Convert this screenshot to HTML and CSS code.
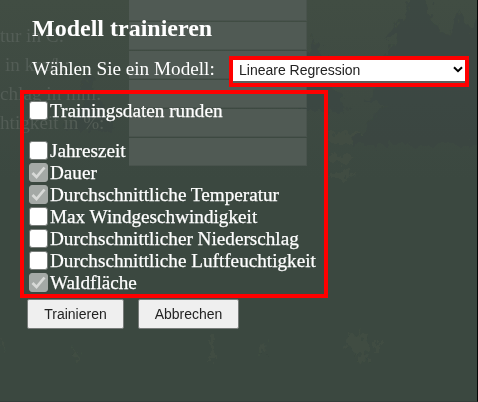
FILE: index.html
```html
<!DOCTYPE html>
<html lang="de">
<head>
<meta charset="utf-8">
<title>Modell trainieren</title>
<link rel="stylesheet" href="styles.css">
</head>
<body>
<div class="backdrop" aria-hidden="true">
  <svg class="forest" viewBox="0 0 478 402">
    <defs><filter id="rough"><feTurbulence type="fractalNoise" baseFrequency=".15 .12" numOctaves="3" seed="4"/><feDisplacementMap in="SourceGraphic" scale="18" xChannelSelector="R" yChannelSelector="G"/><feGaussianBlur stdDeviation=".6"/></filter></defs>
    <g filter="url(#rough)">
      <path class="tree" d="M416-20L405 15 385 38H396L382 68H392L365 104H385L350 145H490V0L470 35 460 10 448 40 434 20Z"/>
      <path class="tree" d="M313 35L306 60 298 81H306L295 112H348L331 82H338L323 60Z"/>
      <path class="tree" d="M88 73L78 96 82 105 65 130H117L101 104Z"/>
      <path class="clearing" d="M330 132h31l-10 12h-20zM330 156h25l-7 8h-18zM329 173h25l-4 6h-22zM344 341l8-7 6 2 2-6 7 7 3 13-8 17-5-12-8-5zM375 337h4v14h-4zM0 337l5 5-2 12zM74 344l6 14-4 6zM210 336h4v25h-4zM258 350l8-6-1 11z"/>
    </g>
  </svg>
  <div class="old-form">
    <div class="old-labels"><span>tur in C:</span><span class="wind">in km/h:</span><span>chlag in mm:</span><span>htigkeit in %:</span></div>
    <div class="old-fields"><i></i><i></i><i></i><i></i><i></i><i></i></div>
  </div>
</div>
<main class="dialog">
  <h1>Modell trainieren</h1>
  <div class="model-row">
    <label for="model">Wählen Sie ein Modell:</label>
    <div class="select-frame">
      <select id="model"><option>Lineare Regression</option></select>
      <svg class="chevron" viewBox="0 0 10 7"><path d="M1 1.2L5 5.2 9 1.2"/></svg>
    </div>
  </div>
  <div class="options">
    <label class="option round"><input type="checkbox"><span>Trainingsdaten runden</span></label>
    <label class="option"><input type="checkbox"><span>Jahreszeit</span></label>
    <label class="option"><input type="checkbox" checked disabled><span>Dauer</span></label>
    <label class="option"><input type="checkbox" checked disabled><span>Durchschnittliche Temperatur</span></label>
    <label class="option"><input type="checkbox"><span>Max Windgeschwindigkeit</span></label>
    <label class="option"><input type="checkbox"><span>Durchschnittlicher Niederschlag</span></label>
    <label class="option"><input type="checkbox"><span>Durchschnittliche Luftfeuchtigkeit</span></label>
    <label class="option"><input type="checkbox" checked disabled><span>Waldfläche</span></label>
  </div>
  <div class="actions"><button class="train">Trainieren</button><button class="cancel">Abbrechen</button></div>
</main>
</body>
</html>
```
FILE: styles.css
```css
* { box-sizing: border-box; }
body {
  margin: 0;
  width: 478px;
  height: 402px;
  overflow: hidden;
  position: relative;
  background: #3c4941;
  color: #fff;
  font: 19.2px/22px "Liberation Serif", serif;
}
.backdrop {
  position: absolute;
  inset: 0;
  overflow: hidden;
  background: linear-gradient(#414d43, #3e4a42 100px, #3b4840 180px, #3b4840);
  border-right: 1px solid #050706;
  border-bottom: 1px solid #353e3b;
}
.forest { position: absolute; inset: 0; width: 478px; height: 402px; }
.tree { fill: #3a4740; opacity: .65; }
.clearing { fill: #424f43; opacity: .7; }
.old-form { position: relative; display: flex; }
.old-labels {
  width: 129px;
  padding-top: 21px;
  display: flex;
  flex-direction: column;
  color: #535d56;
  line-height: 29px;
  white-space: nowrap;
}
.wind { padding-left: 5px; }
.old-fields { width: 178px; margin-top: -7px; display: flex; flex-direction: column; gap: 2px; }
.old-fields i { height: 27px; background: #505a54; border-right: 1px solid #49534d; box-shadow: 0 1px #49534d; }
.dialog { position: relative; }
h1 {
  margin: 0;
  padding: 14px 0 0 32px;
  font-size: 24px;
  line-height: 28px;
}
.model-row {
  display: flex;
  align-items: flex-start;
  padding: 14px 0 0 32px;
  height: 45px;
}
.model-row label { width: 197px; padding-top: 2px; white-space: nowrap; }
.select-frame {
  position: relative;
  width: 240px;
  height: 31px;
  border: 4px solid #f00;
  background: #59615d;
}
select {
  display: block;
  appearance: none;
  width: 232px;
  height: 21px;
  border: 0;
  border-radius: 0;
  padding: 0 6px 1px;
  background: #fff;
  color: #222;
  font: 14px/20px "Liberation Sans", sans-serif;
}
.chevron { position: absolute; right: 2px; top: 6px; width: 10px; height: 7px; fill: none; stroke: #000; stroke-width: 2; }
.options {
  width: 308px;
  height: 208px;
  margin: 3px 0 0 20px;
  border: 4px solid #f00;
  padding: 6px 0 0 5px;
}
.option {
  display: flex;
  align-items: center;
  gap: 2px;
  height: 22px;
  white-space: nowrap;
}
.round { margin-bottom: 18px; }
.option span { -webkit-text-stroke: .25px #fff; }
input {
  appearance: none;
  flex: none;
  width: 19px;
  height: 19px;
  margin: 0 0 1px;
  border: 1px solid #777c79;
  border-radius: 3px;
  background: #fff;
}
input:checked {
  border-color: #a4a9a6;
  background: #a4a9a6 url("data:image/svg+xml,%3Csvg xmlns='http://www.w3.org/2000/svg' viewBox='0 0 17 17'%3E%3Cpath d='M2.5 9L6.5 13 14.5 3.5' fill='none' stroke='%23d8dad8' stroke-width='2.7'/%3E%3C/svg%3E");
}
.actions { display: flex; gap: 14px; padding: 1px 0 0 27px; }
button {
  height: 30px;
  padding: 0;
  border: 1px solid #777b79;
  border-radius: 2px;
  background: #efefef;
  color: #222;
  font: 14px "Liberation Sans", sans-serif;
}
.train { width: 97px; }
.cancel { width: 101px; }
```
